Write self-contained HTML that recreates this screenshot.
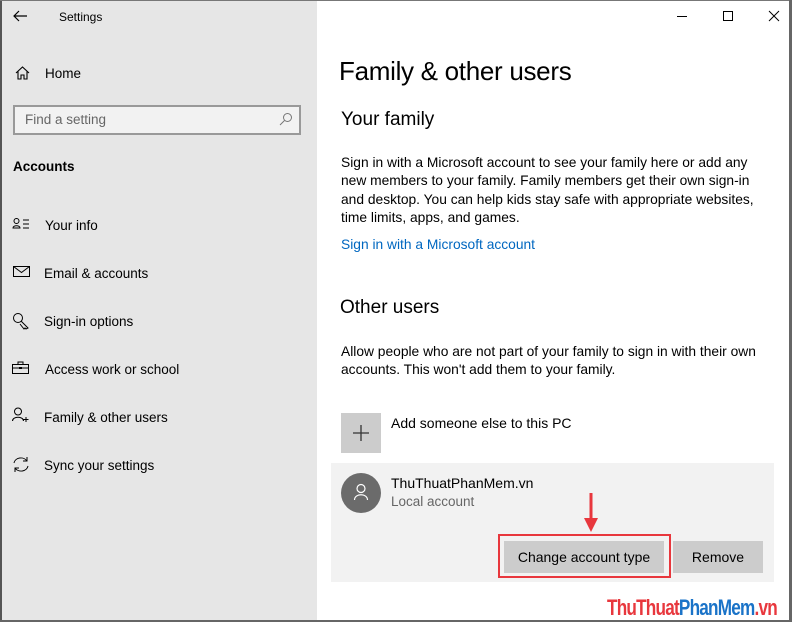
<!DOCTYPE html>
<html><head><meta charset="utf-8"><style>
*{margin:0;padding:0;box-sizing:border-box}
body{width:792px;height:622px;overflow:hidden;font-family:"Liberation Sans",sans-serif;color:#000;background:#fff;position:relative}
.a{position:absolute;white-space:nowrap}
#side{position:absolute;left:0;top:0;width:317px;height:622px;background:#e6e6e6;border-left:2px solid #555;border-top:1px solid #777}
.nav{font-size:13.5px;color:#000}
.p{font-size:13.8px;line-height:18.3px;color:#000}
svg{position:absolute}
</style></head><body>
<div id="side"></div>
<div class="a" style="left:0;top:0;width:792px;height:1px;background:#777"></div>
<div class="a" style="left:789px;top:0;width:3px;height:622px;background:#666"></div>
<div class="a" style="left:0;top:620px;width:792px;height:2px;background:#666"></div>
<svg style="left:12px;top:9px" width="16" height="14" viewBox="0 0 16 14"><path d="M15 7H2M7 2L2 7l5 5" fill="none" stroke="#000" stroke-width="1.2"/></svg>
<div class="a" style="left:59px;top:10px;font-size:12px">Settings</div>
<svg style="left:15px;top:66px" width="15" height="14" viewBox="0 0 15 14"><path d="M1 7L7.5 1 14 7M3 5.5V13h3V9h3v4h3V5.5" fill="none" stroke="#000" stroke-width="1.1"/></svg>
<div class="a nav" style="left:45px;top:66px">Home</div>
<div class="a" style="left:13px;top:105px;width:288px;height:30px;border:2px solid #999;background:#f2f2f2"></div>
<div class="a" style="left:25px;top:112px;font-size:13.5px;color:#666">Find a setting</div>
<svg style="left:279px;top:112px" width="14" height="14" viewBox="0 0 14 14"><circle cx="8.5" cy="5.5" r="4" fill="none" stroke="#777"/><path d="M5.5 8.5L1 13" stroke="#777"/></svg>
<div class="a" style="left:13px;top:159px;font-size:13.5px;font-weight:bold">Accounts</div>
<svg style="left:12px;top:217px" width="20" height="14" viewBox="0 0 20 14"><circle cx="4.5" cy="4" r="2.5" fill="none" stroke="#000"/><path d="M1 11c0-3 7-3 7 0z" fill="none" stroke="#000"/><path d="M11 3h6M11 7h6M11 11h6" stroke="#000"/></svg>
<div class="a nav" style="left:45px;top:218px">Your info</div>
<svg style="left:13px;top:266px" width="18" height="12" viewBox="0 0 18 12"><rect x="0.5" y="0.5" width="16" height="10" fill="none" stroke="#000"/><path d="M0.5 0.5l8 6 8-6" fill="none" stroke="#000"/></svg>
<div class="a nav" style="left:44px;top:266px">Email &amp; accounts</div>
<svg style="left:12px;top:312px" width="18" height="18" viewBox="0 0 18 18"><circle cx="6" cy="6" r="4.5" fill="none" stroke="#000"/><path d="M9 9l7 7-2 1-1-1-1 1-4-5" fill="none" stroke="#000"/></svg>
<div class="a nav" style="left:44px;top:314px">Sign-in options</div>
<svg style="left:12px;top:361px" width="18" height="14" viewBox="0 0 18 14"><rect x="0.5" y="3.5" width="16" height="9" fill="none" stroke="#000"/><path d="M6 3.5V1h5v2.5M0.5 7h16" fill="none" stroke="#000"/><rect x="7" y="6" width="3" height="2" fill="#000"/></svg>
<div class="a nav" style="left:45px;top:362px">Access work or school</div>
<svg style="left:12px;top:407px" width="18" height="16" viewBox="0 0 18 16"><circle cx="6" cy="4.5" r="3.5" fill="none" stroke="#000"/><path d="M0.5 14c0-5 11-5 11 0" fill="none" stroke="#000"/><path d="M14 10v5M11.5 12.5h5" stroke="#000"/></svg>
<div class="a nav" style="left:44px;top:410px">Family &amp; other users</div>
<svg style="left:12px;top:456px" width="18" height="17" viewBox="0 0 18 17"><path d="M2 7a7 6 0 0 1 13-2M16 10a7 6 0 0 1-13 2M15 1v4h-4M3 16v-4h4" fill="none" stroke="#000"/></svg>
<div class="a nav" style="left:44px;top:458px">Sync your settings</div>

<div class="a" style="left:677px;top:16px;width:10px;height:1px;background:#000"></div>
<div class="a" style="left:723px;top:11px;width:10px;height:10px;border:1px solid #000"></div>
<svg style="left:768px;top:10px" width="12" height="12" viewBox="0 0 12 12"><path d="M1 1l10 10M11 1L1 11" stroke="#000"/></svg>

<div class="a" style="left:339px;top:56px;font-size:26px;letter-spacing:-0.3px">Family &amp; other users</div>
<div class="a" style="left:341px;top:109px;font-size:19px">Your family</div>
<div class="a p" style="left:341px;top:154px">Sign in with a Microsoft account to see your family here or add any<br>new members to your family. Family members get their own sign-in<br>and desktop. You can help kids stay safe with appropriate websites,<br>time limits, apps, and games.</div>
<div class="a p" style="left:341px;top:236px;color:#0067c0">Sign in with a Microsoft account</div>
<div class="a" style="left:340px;top:297px;font-size:19px">Other users</div>
<div class="a p" style="left:341px;top:343px">Allow people who are not part of your family to sign in with their own<br>accounts. This won't add them to your family.</div>
<div class="a" style="left:341px;top:413px;width:40px;height:40px;background:#ccc"></div>
<svg style="left:352px;top:424px" width="18" height="18" viewBox="0 0 18 18"><path d="M9 1v16M1 9h16" stroke="#333" stroke-width="1.3"/></svg>
<div class="a" style="left:391px;top:415px;font-size:14px">Add someone else to this PC</div>
<div class="a" style="left:331px;top:463px;width:443px;height:119px;background:#f2f2f2"></div>
<div class="a" style="left:341px;top:473px;width:40px;height:40px;border-radius:50%;background:#6b6b6b"></div>
<svg style="left:353px;top:483px" width="16" height="18" viewBox="0 0 16 18"><circle cx="8" cy="5.5" r="4" fill="none" stroke="#fff" stroke-width="1.2"/><path d="M1.5 17c0-7 13-7 13 0" fill="none" stroke="#fff" stroke-width="1.2"/></svg>
<div class="a" style="left:391px;top:475px;font-size:14px">ThuThuatPhanMem.vn</div>
<div class="a" style="left:391px;top:494px;font-size:13.5px;color:#666">Local account</div>
<svg style="left:583px;top:492px" width="16" height="42" viewBox="0 0 16 42"><path d="M8 1v30" stroke="#e8373d" stroke-width="3"/><path d="M1 26l7 14 7-14z" fill="#e8373d"/></svg>
<div class="a" style="left:498px;top:534px;width:173px;height:44px;border:2px solid #e8373d"></div>
<div class="a" style="left:504px;top:541px;width:160px;height:32px;background:#ccc;font-size:14px;text-align:center;line-height:32px">Change account type</div>
<div class="a" style="left:673px;top:541px;width:90px;height:32px;background:#ccc;font-size:14px;text-align:center;line-height:32px">Remove</div>
<div class="a" style="left:607px;top:595px;font-size:22px;font-weight:bold;letter-spacing:-1px;transform:scaleX(0.78);transform-origin:left"><span style="color:#e8373d">ThuThuat</span><span style="color:#1a73c8">PhanMem</span><span style="color:#e8373d">.vn</span></div>
</body></html>
